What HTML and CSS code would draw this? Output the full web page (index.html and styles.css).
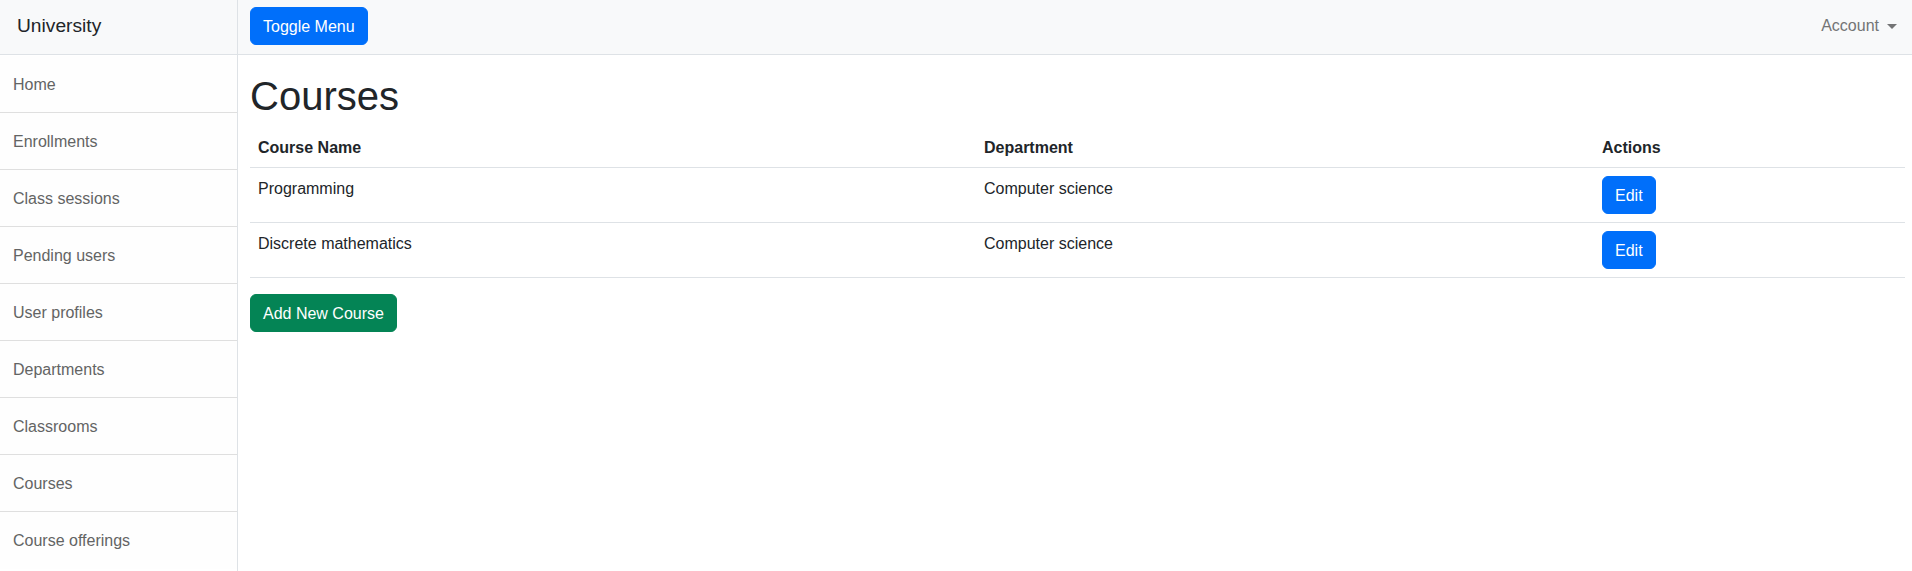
FILE: index.html
```html
<!DOCTYPE html>
<html lang="en">
<head>
<meta charset="utf-8">
<title>Courses</title>
<link rel="stylesheet" href="styles.css">
</head>
<body>
<div class="wrapper">
  <aside class="sidebar">
    <div class="sidebar-heading">University</div>
    <nav class="sidebar-list">
      <a class="sidebar-item" href="#">Home</a>
      <a class="sidebar-item" href="#">Enrollments</a>
      <a class="sidebar-item" href="#">Class sessions</a>
      <a class="sidebar-item" href="#">Pending users</a>
      <a class="sidebar-item" href="#">User profiles</a>
      <a class="sidebar-item" href="#">Departments</a>
      <a class="sidebar-item" href="#">Classrooms</a>
      <a class="sidebar-item" href="#">Courses</a>
      <a class="sidebar-item" href="#">Course offerings</a>
    </nav>
  </aside>
  <div class="page">
    <nav class="topbar">
      <button class="btn btn-primary" type="button">Toggle Menu</button>
      <a class="account" href="#">Account<span class="caret"></span></a>
    </nav>
    <main class="content">
      <h1 class="title">Courses</h1>
      <table class="table">
        <colgroup>
          <col class="col-name">
          <col class="col-dept">
          <col class="col-actions">
        </colgroup>
        <thead>
          <tr>
            <th>Course Name</th>
            <th>Department</th>
            <th>Actions</th>
          </tr>
        </thead>
        <tbody>
          <tr>
            <td>Programming</td>
            <td>Computer science</td>
            <td><button class="btn btn-primary" type="button">Edit</button></td>
          </tr>
          <tr>
            <td>Discrete mathematics</td>
            <td>Computer science</td>
            <td><button class="btn btn-primary" type="button">Edit</button></td>
          </tr>
        </tbody>
      </table>
      <button class="btn btn-success" type="button">Add New Course</button>
    </main>
  </div>
</div>
</body>
</html>
```

FILE: styles.css
```css
* {
  box-sizing: border-box;
}

html, body {
  margin: 0;
  padding: 0;
}

body {
  font-family: "Liberation Sans", Arial, sans-serif;
  font-size: 16px;
  line-height: 24px;
  color: #212529;
  background: #ffffff;
}

.wrapper {
  display: flex;
  min-height: 100vh;
}

.sidebar {
  width: 238px;
  flex: 0 0 238px;
  border-right: 1px solid #dee2e6;
  background: #ffffff;
}

.sidebar-heading {
  height: 55px;
  padding: 12px 16px 0 17px;
  font-size: 19.2px;
  line-height: 28.8px;
  color: #212529;
  background: #f8f9fa;
  border-bottom: 1px solid #dee2e6;
}

.sidebar-list {
  display: flex;
  flex-direction: column;
  padding-top: 1px;
}

.sidebar-item {
  display: block;
  padding: 17px 13px 15px 13px;
  height: 57px;
  color: #636464;
  background: #fefefe;
  text-decoration: none;
  border-bottom: 1px solid #dfdfdf;
}

.sidebar-item:last-child {
  border-bottom: 0;
}

.page {
  flex: 1 1 auto;
  min-width: 0;
  display: flex;
  flex-direction: column;
}

.topbar {
  height: 55px;
  display: flex;
  align-items: flex-start;
  justify-content: space-between;
  padding: 7px 7px 0 12px;
  background: #f8f9fa;
  border-bottom: 1px solid #dee2e6;
}

.btn {
  display: inline-block;
  font-family: inherit;
  font-size: 16px;
  line-height: 24px;
  height: 38px;
  padding: 7px 12px 5px 12px;
  border: 1px solid transparent;
  border-radius: 6px;
  color: #ffffff;
  cursor: pointer;
}

.btn-primary {
  background: #006ffa;
  border-color: #006ffa;
}

.btn-success {
  background: #048455;
  border-color: #048455;
}

.account {
  display: flex;
  align-items: center;
  height: 38px;
  padding: 0 8px;
  color: #737475;
  text-decoration: none;
}

.caret {
  display: inline-block;
  width: 0;
  height: 0;
  margin-left: 8px;
  margin-top: 1px;
  border-top: 5px solid #737475;
  border-left: 5px solid transparent;
  border-right: 5px solid transparent;
}

.content {
  padding: 0 7px 0 12px;
}

.title {
  margin: 17px 0 7px 0;
  font-size: 40px;
  line-height: 48px;
  font-weight: 500;
  color: #212529;
}

.table {
  width: 100%;
  border-collapse: collapse;
  table-layout: fixed;
  margin-bottom: 16px;
  vertical-align: top;
}

.col-name {
  width: 726px;
}

.col-dept {
  width: 618px;
}

.table th,
.table td {
  padding: 9px 8px 7px 8px;
  text-align: left;
  vertical-align: top;
  border-bottom: 1px solid #dee2e6;
}

.table td .btn {
  margin-top: -1px;
  margin-bottom: 1px;
}

.table th {
  font-weight: 700;
}
```
